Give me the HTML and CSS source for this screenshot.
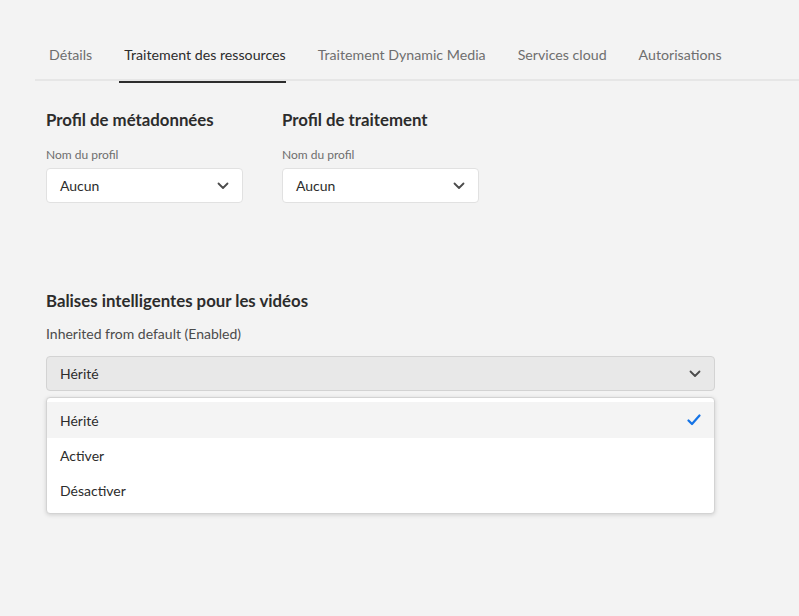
FILE: index.html
```html
<!DOCTYPE html>
<html lang="fr">
<head>
<meta charset="utf-8">
<link rel="stylesheet" href="styles.css">
</head>
<body>
<div class="page">
  <nav class="tabs">
    <div class="tab">Détails</div>
    <div class="tab active">Traitement des ressources</div>
    <div class="tab">Traitement Dynamic Media</div>
    <div class="tab">Services cloud</div>
    <div class="tab">Autorisations</div>
  </nav>
  <div class="content">
    <div class="profiles">
      <section class="profile">
        <h2 class="heading">Profil de métadonnées</h2>
        <div class="label">Nom du profil</div>
        <div class="select">
          <span>Aucun</span>
          <svg class="chev" width="12" height="8" viewBox="0 0 12 8"><path d="M1.5 1.5 L6 6 L10.5 1.5" fill="none" stroke="#4b4b4b" stroke-width="1.8" stroke-linecap="round" stroke-linejoin="round"/></svg>
        </div>
      </section>
      <section class="profile">
        <h2 class="heading">Profil de traitement</h2>
        <div class="label">Nom du profil</div>
        <div class="select">
          <span>Aucun</span>
          <svg class="chev" width="12" height="8" viewBox="0 0 12 8"><path d="M1.5 1.5 L6 6 L10.5 1.5" fill="none" stroke="#4b4b4b" stroke-width="1.8" stroke-linecap="round" stroke-linejoin="round"/></svg>
        </div>
      </section>
    </div>
    <section class="tags">
      <h2 class="heading">Balises intelligentes pour les vidéos</h2>
      <div class="hint">Inherited from default (Enabled)</div>
      <div class="select wide open">
        <span>Hérité</span>
        <svg class="chev" width="12" height="8" viewBox="0 0 12 8"><path d="M1.5 1.5 L6 6 L10.5 1.5" fill="none" stroke="#4b4b4b" stroke-width="1.8" stroke-linecap="round" stroke-linejoin="round"/></svg>
      </div>
      <ul class="menu">
        <li class="item selected"><span>Hérité</span>
          <svg width="14" height="12" viewBox="0 0 14 12"><path d="M1.5 6.5 L5 10 L12.5 1.5" fill="none" stroke="#1473e6" stroke-width="2.2" stroke-linecap="round" stroke-linejoin="round"/></svg>
        </li>
        <li class="item"><span>Activer</span></li>
        <li class="item"><span>Désactiver</span></li>
      </ul>
    </section>
  </div>
</div>
</body>
</html>
```

FILE: styles.css
```css
* { box-sizing: border-box; }
html, body { margin: 0; padding: 0; }
body {
  background: #f3f3f3;
  font-family: Lato, "Noto Sans", sans-serif;
  color: #2c2c2c;
  width: 799px;
  height: 616px;
  overflow: hidden;
}
.page { padding-top: 34px; }
.tabs {
  display: flex;
  gap: 32px;
  margin-left: 35px;
  padding-left: 14px;
  border-bottom: 2px solid #e6e6e6;
  height: 47px;
}
.tab {
  font-size: 14.2px;
  color: #6e6e6e;
  line-height: 20px;
  padding-top: 11px;
  height: 47px;
  position: relative;
}
.tab.active { color: #2c2c2c; }
.tab.active::after {
  content: "";
  position: absolute;
  left: -5px;
  right: 0;
  bottom: -2px;
  height: 2px;
  background: #2c2c2c;
}
.content { padding-left: 46px; }
.profiles { display: flex; gap: 39px; padding-top: 28px; }
.profile { width: 197px; }
.heading {
  margin: 0;
  font-size: 16.8px;
  font-weight: 700;
  line-height: 22px;
  color: #2c2c2c;
}
.label {
  font-size: 12px;
  color: #6e6e6e;
  margin-top: 16px;
  line-height: 16px;
}
.select {
  margin-top: 5px;
  height: 35px;
  background: #fff;
  border: 1px solid #e1e1e1;
  border-radius: 4px;
  display: flex;
  align-items: center;
  justify-content: space-between;
  padding: 0 13px 0 13px;
  font-size: 14px;
  color: #2c2c2c;
}
.tags { padding-top: 87px; width: 669px; }
.hint {
  margin-top: 12px;
  font-size: 14px;
  color: #4b4b4b;
  line-height: 20px;
}
.select.wide {
  margin-top: 12px;
  background: #e8e8e8;
  border-color: #d3d3d3;
}
.menu {
  list-style: none;
  margin: 6px 0 0;
  padding: 4px 0 5px;
  background: #fff;
  border: 1px solid #d3d3d3;
  border-radius: 4px;
  box-shadow: 0 1px 4px rgba(0,0,0,0.15);
}
.item {
  height: 35px;
  display: flex;
  align-items: center;
  justify-content: space-between;
  padding: 0 13px 0 13px;
  font-size: 14px;
  color: #2c2c2c;
}
.item.selected { background: #f4f4f4; height: 36px; }
```
